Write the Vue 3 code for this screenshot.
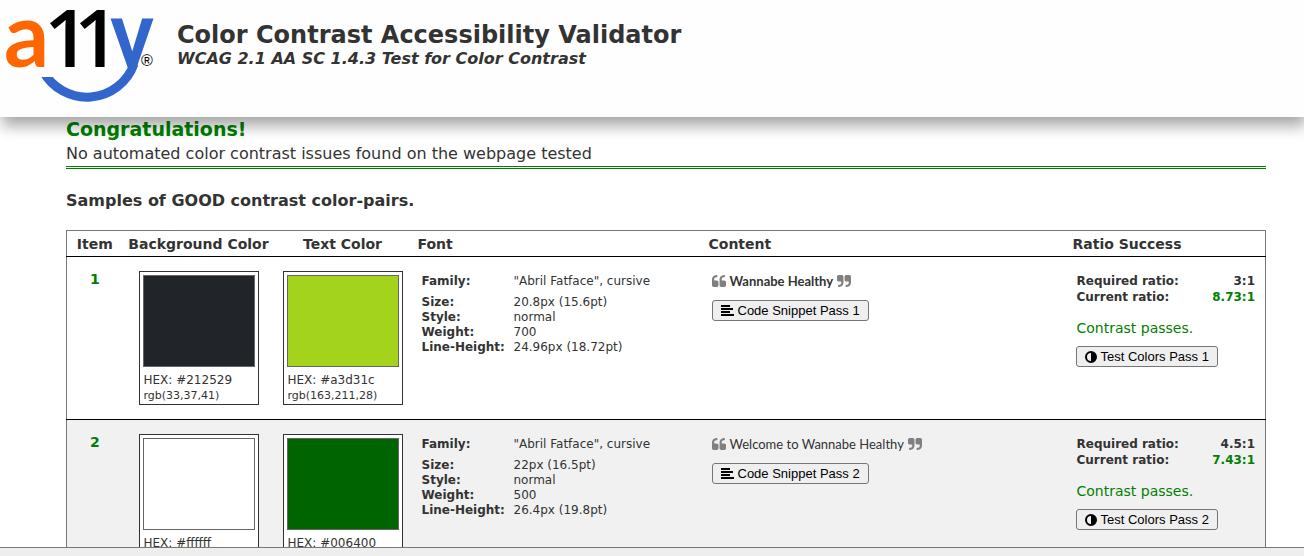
<script setup>
const rows = [
  {
    id: 1,
    colors: [
      { hex: '#212529', rgb: 'rgb(33,37,41)' },
      { hex: '#a3d31c', rgb: 'rgb(163,211,28)' },
    ],
    family: '"Abril Fatface", cursive',
    details: [
      ['Size:', '20.8px (15.6pt)'],
      ['Style:', 'normal'],
      ['Weight:', '700'],
      ['Line-Height:', '24.96px (18.72pt)'],
    ],
    content: 'Wannabe Healthy',
    bold: true,
    required: '3:1',
    current: '8.73:1',
  },
  {
    id: 2,
    colors: [
      { hex: '#ffffff', rgb: 'rgb(255,255,255)' },
      { hex: '#006400', rgb: 'rgb(0,100,0)' },
    ],
    family: '"Abril Fatface", cursive',
    details: [
      ['Size:', '22px (16.5pt)'],
      ['Style:', 'normal'],
      ['Weight:', '500'],
      ['Line-Height:', '26.4px (19.8pt)'],
    ],
    content: 'Welcome to Wannabe Healthy',
    bold: false,
    required: '4.5:1',
    current: '7.43:1',
  },
]
</script>

<template>
  <div class="page">
    <header class="banner">
      <svg class="logo" viewBox="0 0 160 108" role="img" aria-label="a11y">
        <defs>
          <clipPath id="arms"><rect x="100" y="0" width="60" height="67" /></clipPath>
          <clipPath id="curve"><path d="M0 77H100V0H160V108H0z" /></clipPath>
        </defs>
        <text class="logo-a" x="4" y="67">a</text>
        <text class="logo-one" x="44" y="67">1</text>
        <text class="logo-one" x="74" y="67">1</text>
        <text class="logo-y" x="110" y="67" clip-path="url(#arms)">y</text>
        <path class="smile" d="M43 71A50 50 0 0 0 134 64" clip-path="url(#curve)" />
        <text class="logo-r" x="141" y="66">®</text>
      </svg>
      <div class="titles">
        <h1>Color Contrast Accessibility Validator</h1>
        <p>WCAG 2.1 AA SC 1.4.3 Test for Color Contrast</p>
      </div>
    </header>

    <main class="results">
      <section class="summary">
        <h2>Congratulations!</h2>
        <p>No automated color contrast issues found on the webpage tested</p>
      </section>

      <h3>Samples of GOOD contrast color-pairs.</h3>

      <table class="pairs">
        <colgroup>
          <col class="col-item" />
          <col class="col-color" />
          <col class="col-color" />
          <col class="col-font" />
          <col />
          <col class="col-ratio" />
        </colgroup>
        <thead>
          <tr>
            <th class="center item" scope="col">Item</th>
            <th class="center" scope="col">Background Color</th>
            <th class="center" scope="col">Text Color</th>
            <th scope="col">Font</th>
            <th scope="col">Content</th>
            <th scope="col">Ratio Success</th>
          </tr>
        </thead>
        <tbody>
          <tr v-for="row in rows" :key="row.id">
            <td class="number">{{ row.id }}</td>
            <td v-for="color in row.colors" :key="color.hex" class="color">
              <div class="card">
                <div class="swatch" :style="{ background: color.hex }"></div>
                <div class="hex">HEX: {{ color.hex }}</div>
                <div class="rgb">{{ color.rgb }}</div>
              </div>
            </td>
            <td>
              <dl class="font">
                <dt class="family">Family:</dt>
                <dd class="family">{{ row.family }}</dd>
                <template v-for="[name, value] in row.details" :key="name">
                  <dt>{{ name }}</dt>
                  <dd>{{ value }}</dd>
                </template>
              </dl>
            </td>
            <td>
              <div class="quote">
                <svg class="mark" viewBox="64 128 1664 1408" aria-hidden="true">
                  <path d="M832 960v384q0 80-56 136t-136 56h-384q-80 0-136-56t-56-136v-704q0-104 40.500-198.500t109.500-163.500 163.500-109.500 198.500-40.500h64q26 0 45 19t19 45v128q0 26-19 45t-45 19h-64q-106 0-181 75t-75 181v32q0 40 28 68t68 28h224q80 0 136 56t56 136zm896 0v384q0 80-56 136t-136 56h-384q-80 0-136-56t-56-136v-704q0-104 40.500-198.500t109.500-163.500 163.500-109.500 198.500-40.500h64q26 0 45 19t19 45v128q0 26-19 45t-45 19h-64q-106 0-181 75t-75 181v32q0 40 28 68t68 28h224q80 0 136 56t56 136z" />
                </svg>
                <span :class="{ strong: row.bold }">{{ row.content }}</span>
                <svg class="mark" viewBox="64 128 1664 1408" aria-hidden="true">
                  <path d="M832 320v704q0 104-40.500 198.500t-109.500 163.500-163.500 109.500-198.500 40.500h-64q-26 0-45-19t-19-45v-128q0-26 19-45t45-19h64q106 0 181-75t75-181v-32q0-40-28-68t-68-28h-224q-80 0-136-56t-56-136v-384q0-80 56-136t136-56h384q80 0 136 56t56 136zm896 0v704q0 104-40.500 198.500t-109.500 163.500-163.500 109.500-198.500 40.500h-64q-26 0-45-19t-19-45v-128q0-26 19-45t45-19h64q106 0 181-75t75-181v-32q0-40-28-68t-68-28h-224q-80 0-136-56t-56-136v-384q0-80 56-136t136-56h384q80 0 136 56t56 136z" />
                </svg>
              </div>
              <button type="button">
                <svg class="lines" viewBox="0 0 13 11" aria-hidden="true">
                  <path d="M0 0h9v2H0zM0 3h12v2H0zM0 6h9v2H0zM0 9h13v2H0z" />
                </svg>
                Code Snippet Pass {{ row.id }}
              </button>
            </td>
            <td>
              <dl class="ratio">
                <dt>Required ratio:</dt>
                <dd>{{ row.required }}</dd>
                <dt>Current ratio:</dt>
                <dd class="good">{{ row.current }}</dd>
              </dl>
              <p class="verdict">Contrast passes.</p>
              <button type="button">
                <svg class="half" viewBox="0 0 12 12" aria-hidden="true">
                  <path fill-rule="evenodd" d="M6 0a6 6 0 1 0 0 12A6 6 0 0 0 6 0zM6 2v8a4 4 0 0 1 0-8z" />
                </svg>
                Test Colors Pass {{ row.id }}
              </button>
            </td>
          </tr>
        </tbody>
      </table>
    </main>

    <footer class="dock"></footer>
  </div>
</template>

<style>
body {
  margin: 0;
}
</style>

<style scoped>
.page {
  display: flex;
  flex-direction: column;
  height: 100vh;
  overflow: hidden;
  background: #fff;
  color: #333;
  font-family: Verdana, "DejaVu Sans", sans-serif;
}

h1, h2, h3, p, dl, dd {
  margin: 0;
}

.banner {
  position: relative;
  z-index: 1;
  display: flex;
  flex: none;
  gap: 17px;
  padding-bottom: 9px;
  background: #fefefe;
  box-shadow: 2px 9px 14px rgba(0, 0, 0, 0.35);
}

.logo {
  width: 160px;
  height: 108px;
  overflow: visible;
}

.logo .logo-a {
  fill: #f60;
  font: 700 89px Lato, sans-serif;
}

.logo .logo-one {
  fill: #000;
  font: 600 80px "Open Sans", sans-serif;
}

.logo .logo-y {
  fill: #36c;
  font: 500 90px Roboto, sans-serif;
}

.logo .logo-r {
  fill: #000;
  font: 16px "Liberation Sans", sans-serif;
}

.smile {
  fill: none;
  stroke: #36c;
  stroke-width: 9px;
}

.titles {
  padding-top: 21px;
}

h1 {
  font-size: 24px;
  line-height: 28px;
}

.titles p {
  font-size: 16px;
  font-style: italic;
  font-weight: 700;
  line-height: 20px;
}

.results {
  flex: 1;
  min-height: 0;
  overflow: hidden;
  padding: 0 38px 0 66px;
}

.summary {
  border-bottom: 3px double green;
}

h2 {
  color: green;
  font-size: 19px;
  line-height: 24px;
}

.summary p {
  font-size: 16px;
  line-height: 25px;
}

h3 {
  padding: 21px 0 19px;
  font-size: 16px;
  line-height: 21px;
}

.pairs {
  width: 100%;
  table-layout: fixed;
  border: 1px solid #777;
  border-collapse: collapse;
}

.col-item {
  width: 60px;
}

.col-color {
  width: 144px;
}

.col-font {
  width: 291px;
}

.col-ratio {
  width: 196px;
}

th {
  padding: 4px 3px 2px;
  font-size: 14px;
  line-height: 19px;
  text-align: left;
  white-space: nowrap;
}

th.center {
  padding: 4px 0 2px;
  text-align: center;
}

th.item {
  padding-right: 4px;
}

tbody tr {
  border-top: 1px solid #000;
}

tbody tr:nth-child(even) {
  background: #f1f1f1;
}

td {
  padding: 14px 10px 14px 6px;
  vertical-align: top;
}

td.color {
  padding: 14px 12px;
}

td.number {
  padding: 14px 4px 14px 0;
  color: green;
  font-size: 14px;
  font-weight: 700;
  line-height: 17px;
  text-align: center;
}

.card {
  box-sizing: border-box;
  width: 120px;
  padding: 3px 3px 0;
  border: 1px solid #333;
  background: #fff;
}

.swatch {
  height: 90px;
  margin-bottom: 6px;
  border: 1px solid #666;
}

.hex,
.rgb {
  padding-left: 1px;
  font-size: 12px;
  line-height: 15px;
}

.rgb {
  font-size: 11px;
  line-height: 16px;
}

.font {
  display: grid;
  grid-template-columns: 92px 1fr;
  padding: 3px 0 0 1px;
  font-size: 12px;
  line-height: 15px;
}

dt {
  font-weight: 700;
}

.family {
  padding-bottom: 6px;
}

.quote {
  display: flex;
  align-items: center;
  gap: 4px;
  margin-bottom: 9px;
  font-family: "Comic Sans MS", Lato, sans-serif;
  font-size: 13px;
  line-height: 20px;
}

.strong {
  font-weight: 700;
}

.mark {
  width: 14px;
  height: 12px;
  fill: #808080;
}

button {
  display: flex;
  align-items: center;
  gap: 4px;
  padding: 1px 8px;
  border: 1px solid #767676;
  border-radius: 3px;
  background: #efefef;
  color: #000;
  font-family: "Liberation Sans", Arial, sans-serif;
  font-size: 13px;
  line-height: 17px;
  white-space: nowrap;
}

.lines {
  width: 13px;
  height: 11px;
}

.half {
  width: 12px;
  height: 12px;
}

.ratio {
  display: grid;
  grid-template-columns: 1fr auto;
  padding: 2px 0 0 1px;
  font-size: 12px;
  font-weight: 700;
  line-height: 16px;
}

.ratio dd {
  text-align: right;
}

.good {
  color: green;
}

.verdict {
  padding: 14px 0 9px 1px;
  color: green;
  font-size: 14px;
  line-height: 18px;
}

.dock {
  flex: none;
  height: 8px;
  border-top: 1px solid #777;
  background: #eee;
}
</style>
